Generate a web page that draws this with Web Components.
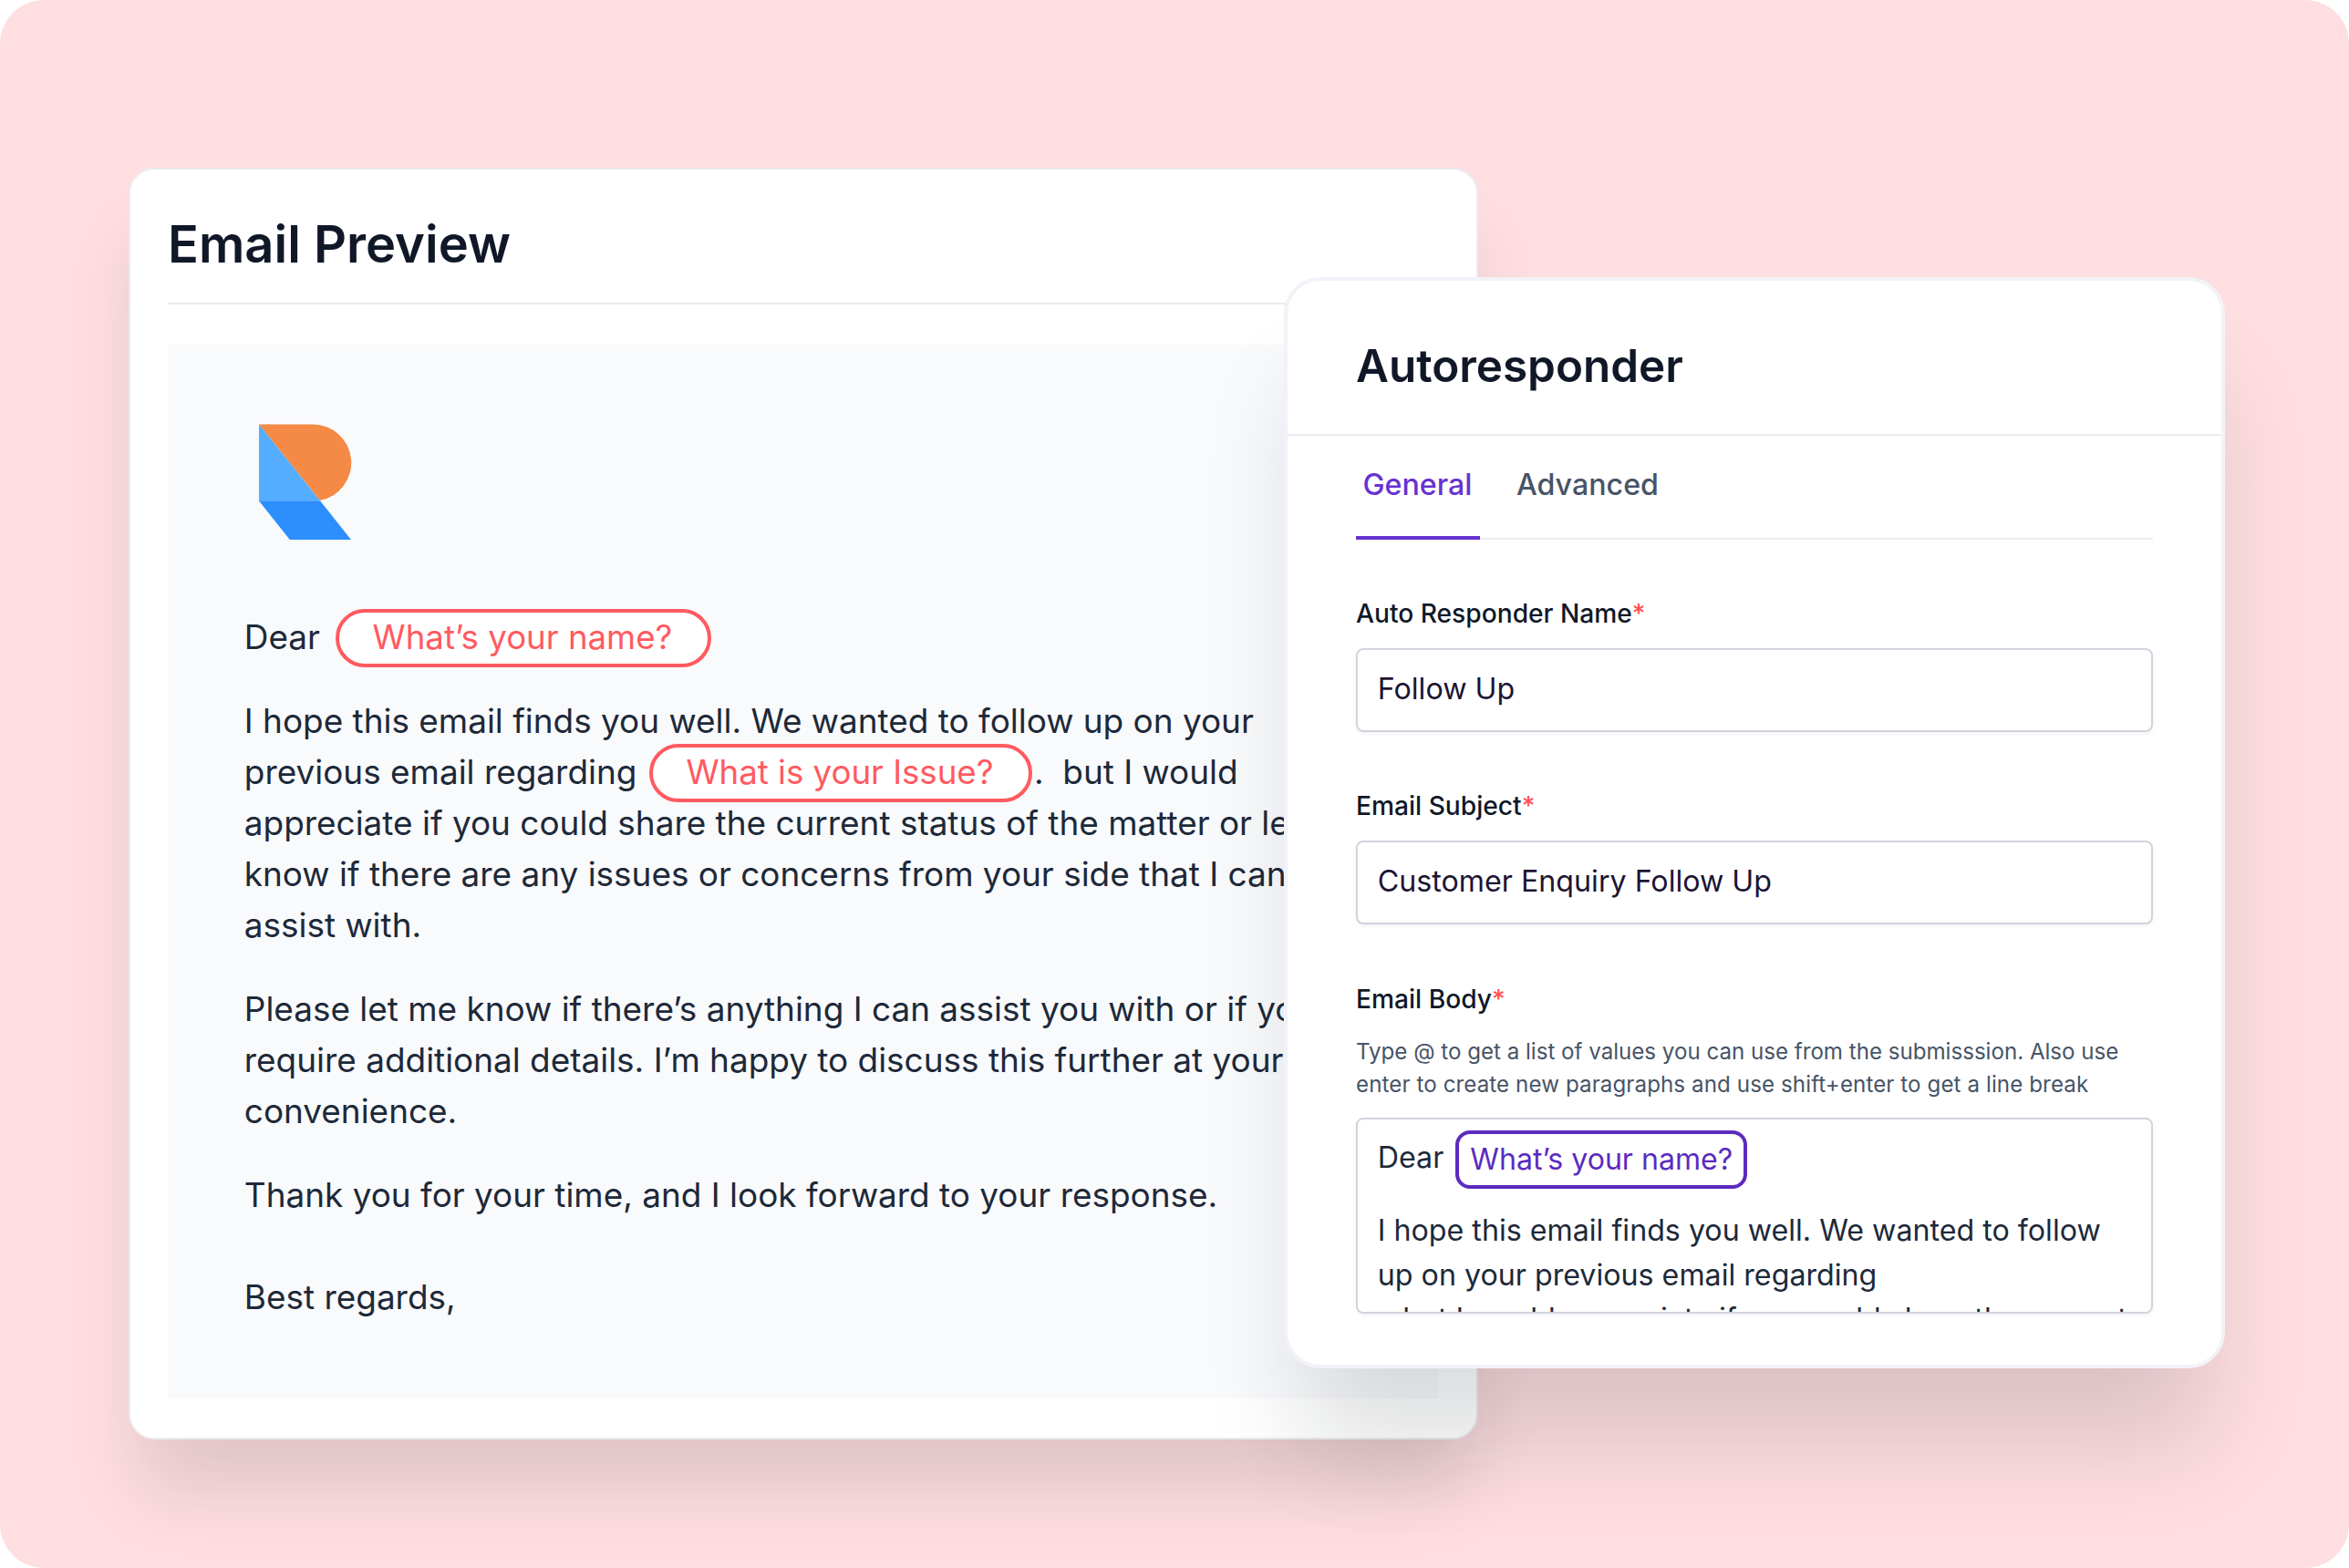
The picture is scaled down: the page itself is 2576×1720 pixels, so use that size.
<!DOCTYPE html>
<html lang="en">
<head>
<meta charset="utf-8">
<title>Autoresponder</title>
<style>
  html, body { margin: 0; background: #fff; }
  body { width: 2576px; height: 1720px; overflow: hidden; font-family: Inter, "Liberation Sans", sans-serif; }
</style>
</head>
<body>
<app-stage>
  <preview-card heading="Email Preview">
    <brand-logo></brand-logo>
    <letter-line>Dear<merge-tag style="--gap-left:17.4px">What’s your name?</merge-tag></letter-line>
    <letter-line>I hope this email finds you well. We wanted to follow up on your<br>previous email regarding<merge-tag style="--gap-left:13.8px;--gap-right:1.5px">What is your Issue?</merge-tag>.&nbsp; but I would<br>appreciate if you could share the current status of the matter or let<br>know if there are any issues or concerns from your side that I can<br>assist with.</letter-line>
    <letter-line>Please let me know if there’s anything I can assist you with or if you<br>require additional details. I’m happy to discuss this further at your<br>convenience.</letter-line>
    <letter-line>Thank you for your time, and I look forward to your response.<br><br>Best regards,</letter-line>
  </preview-card>
  <settings-card heading="Autoresponder">
    <tab-bar slot="tabs">
      <tab-item active>General</tab-item>
      <tab-item>Advanced</tab-item>
    </tab-bar>
    <form-field label="Auto Responder Name"><text-box>Follow Up</text-box></form-field>
    <form-field label="Email Subject"><text-box>Customer Enquiry Follow Up</text-box></form-field>
    <form-field label="Email Body">
      <span slot="help">Type @ to get a list of values you can use from the submisssion. Also use<br><span style="letter-spacing:.1px">enter to create new paragraphs and use shift+enter to get a line break</span></span>
      <rich-editor>
        <editor-line>Dear<merge-tag kind="token" style="--gap-left:13px">What’s your name?</merge-tag></editor-line>
        <editor-line>I hope this email finds you well. We wanted to follow<br>up on your previous email regarding<br>.&nbsp; but I would appreciate if you could share the current</editor-line>
      </rich-editor>
    </form-field>
  </settings-card>
</app-stage>
<script>
const define = (name, markup) => customElements.define(name, class extends HTMLElement {
  constructor() {
    super();
    const root = this.attachShadow({ mode: 'open' });
    root.innerHTML = markup;
    root.querySelectorAll('[data-attr]').forEach(n => { n.textContent = this.getAttribute(n.dataset.attr) || ''; });
  }
});

define('app-stage', `
  <style>
    :host { display: grid; width: 2576px; height: 1720px; border-radius: 48px; background: #fedee0; overflow: hidden; justify-items: start; align-items: start; }
    ::slotted(*) { grid-area: 1 / 1; }
  </style><slot></slot>`);

define('preview-card', `
  <style>
    :host { display: flex; flex-direction: column; box-sizing: border-box; width: 1480px; height: 1395px; margin: 184px 0 0 141px; padding: 0 42px 43px 41px; border: 2px solid #eaecf0; border-radius: 28px; background: #fff; box-shadow: 0 68px 80px -13px rgba(16,20,28,.12); }
    h1 { margin: 0; padding: 48px 0 30px; border-bottom: 2px solid #ebebed; font-size: 56px; line-height: 68px; font-weight: 600; color: #101828; }
    article { flex: 1; margin-top: 44px; padding: 87px 0 0 83.8px; background: #f9fafc; display: flex; flex-direction: column; align-items: flex-start; gap: 36px; }
  </style>
  <h1 data-attr="heading"></h1><article><slot></slot></article>`);

define('brand-logo', `
  <style>:host { display: block; margin: 0 0 43.2px 16.2px; height: 127px; } svg { display: block; }</style>
  <svg width="102" height="127" viewBox="0 0 102 127">
    <path d="M0 .5H59A42.1 42.1 0 0 1 66.8 84Z" fill="#f48a45"/>
    <path d="M0 .5V84.8H67.3Z" fill="#54adff"/>
    <path d="M0 84.6H67.2L101 127H33.8Z" fill="#2d8efd"/>
  </svg>`);

define('letter-line', `
  <style>:host { display: block; font-size: 36.93px; line-height: 56px; color: #1d2939; white-space: nowrap; }</style><slot></slot>`);

define('merge-tag', `
  <style>
    :host { display: inline-block; box-sizing: border-box; margin: -6px var(--gap-right, 0px) -6px var(--gap-left, 0px); padding: 0 39px 3px 36.2px; border: 4px solid #ff5a5f; border-radius: 32px; background: #fff; color: #ff5a5f; font-size: 36.65px; line-height: 53px; }
    :host([kind=token]) { margin-top: -10px; margin-bottom: -10px; padding: 0 11.5px 0 12px; border-color: #5b2bbf; border-radius: 16px; color: #5b2bbf; font-size: 32.1px; line-height: 56px; vertical-align: -2px; }
  </style><slot></slot>`);

define('settings-card', `
  <style>
    :host { display: flex; flex-direction: column; box-sizing: border-box; width: 1032px; height: 1197px; margin: 304px 0 0 1408px; border: 4px solid #f2f3f8; border-radius: 40px; background: #fff; box-shadow: 0 100px 112px -20px rgba(16,20,28,.14); }
    h2 { margin: 0; padding: 63px 75px 45px; border-bottom: 2px solid #ebebf0; font-size: 49.4px; line-height: 60px; font-weight: 600; color: #101828; }
    section { display: flex; flex-direction: column; gap: 61.6px; padding: 60.5px 75px 0; }
  </style>
  <h2 data-attr="heading"></h2><slot name="tabs"></slot><section><slot></slot></section>`);

define('tab-bar', `
  <style>:host { display: flex; gap: 40px; margin: 0 75px; box-shadow: inset 0 -2px #edeef3; }</style><slot></slot>`);

define('tab-item', `
  <style>
    :host { display: block; padding: 30px 0 32px; border-bottom: 4px solid transparent; font-size: 32.2px; line-height: 48px; font-weight: 500; color: #475467; }
    :host([active]) { padding-left: 7.5px; padding-right: 8.5px; border-color: #6732d1; color: #6732d1; }
  </style><slot></slot>`);

define('form-field', `
  <style>
    :host { display: flex; flex-direction: column; gap: 18px; }
    label { font-size: 28.17px; line-height: 40px; font-weight: 500; color: #101828; }
    i { font-style: normal; color: #ff5252; }
    ::slotted([slot=help]) { margin: 2.2px 0 0; font-size: 24.12px; line-height: 36.2px; color: #475467; white-space: nowrap; }
  </style>
  <label><span data-attr="label"></span><i>*</i></label><slot name="help"></slot><slot></slot>`);

define('text-box', `
  <style>:host { display: flex; align-items: center; box-sizing: border-box; height: 92px; padding: 0 21.8px 3px; border: 2px solid #d0d5dd; border-radius: 8px; background: #fff; box-shadow: 0 2px 4px rgba(16,24,40,.05); font-size: 32.2px; color: #1c1433; white-space: nowrap; }</style><slot></slot>`);

define('rich-editor', `
  <style>:host { display: flex; flex-direction: column; gap: 32.3px; box-sizing: border-box; height: 215px; padding: 17.5px 21.8px 0; overflow: hidden; border: 2px solid #d0d5dd; border-radius: 8px; background: #fff; box-shadow: 0 2px 4px rgba(16,24,40,.05); }</style><slot></slot>`);

define('editor-line', `
  <style>:host { display: block; font-size: 32.2px; line-height: 48.3px; color: #1d2939; white-space: nowrap; }</style><slot></slot>`);
</script>
</body>
</html>
